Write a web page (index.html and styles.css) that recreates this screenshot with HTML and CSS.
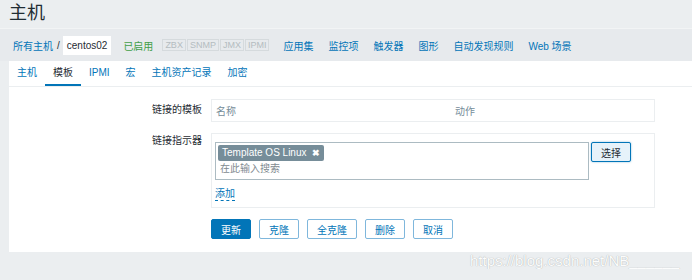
FILE: index.html
```html
<!DOCTYPE html>
<html lang="zh-CN">
<head>
  <meta charset="UTF-8">
  <title>主机</title>
  <link rel="stylesheet" href="styles.css">
</head>
<body>

  <header class="page-header">
    <h1>主机</h1>
  </header>

  <nav class="host-nav">
    <a class="crumb">所有主机</a>
    <span class="sep">/</span>
    <span class="crumb-current">centos02</span>
    <span class="status-on">已启用</span>
    <span class="avail">
      <span class="avail-tag">ZBX</span><span class="avail-tag">SNMP</span><span class="avail-tag">JMX</span><span class="avail-tag">IPMI</span>
    </span>
    <a class="nav-link">应用集</a>
    <a class="nav-link">监控项</a>
    <a class="nav-link">触发器</a>
    <a class="nav-link">图形</a>
    <a class="nav-link">自动发现规则</a>
    <a class="nav-link">Web 场景</a>
  </nav>

  <section class="panel">
    <ul class="tabs">
      <li>主机</li>
      <li class="active">模板</li>
      <li>IPMI</li>
      <li>宏</li>
      <li>主机资产记录</li>
      <li>加密</li>
    </ul>

    <div class="form">
      <div class="form-row">
        <label class="form-label">链接的模板</label>
        <div class="table-box">
          <span class="col-name">名称</span>
          <span class="col-action">动作</span>
        </div>
      </div>

      <div class="form-row">
        <label class="form-label label-top">链接指示器</label>
        <div class="link-box">
          <div class="select-row">
            <div class="multiselect">
              <span class="tag">Template OS Linux <b class="tag-x">&#10006;</b></span>
              <span class="placeholder">在此输入搜索</span>
            </div>
            <button type="button" class="pick-btn">选择</button>
          </div>
          <a class="add-link">添加</a>
        </div>
      </div>

      <div class="form-row buttons">
        <span class="form-label"></span>
        <div class="btn-row">
          <button type="button" class="btn btn-main">更新</button>
          <button type="button" class="btn">克隆</button>
          <button type="button" class="btn">全克隆</button>
          <button type="button" class="btn">删除</button>
          <button type="button" class="btn">取消</button>
        </div>
      </div>
    </div>
  </section>

  <div class="watermark">https://blog.csdn.net/NB______</div>

</body>
</html>
```

FILE: styles.css
```css
body {
  margin: 0;
  background-color: #ebeef0;
  font-family: 'Liberation Sans', Arial, 'Noto Sans CJK SC', sans-serif;
  font-size: 10px;
  color: #1f2c33;
}

.page-header {
  height: 28px;
  padding-left: 9px;
  border-bottom: 1px solid #f2f4f5;
}

.page-header h1 {
  margin: 0;
  padding-top: 1px;
  font-size: 18px;
  font-weight: normal;
  line-height: 24px;
}

.host-nav {
  height: 32px;
  padding-left: 13px;
  display: flex;
  align-items: center;
  background-color: #e7eaed;
}

.crumb {
  color: #0275b8;
}

.sep {
  margin: 0 3px 0 4px;
  color: #1f2c33;
}

.crumb-current {
  background-color: #fff;
  padding: 4px 4px;
  line-height: 11px;
  color: #1f2c33;
}

.status-on {
  color: #429e47;
  margin-left: 12px;
}

.avail {
  display: flex;
  margin-left: 9px;
  margin-right: 13px;
}

.avail-tag {
  font-size: 9px;
  color: #b4bcc0;
  padding: 0 2px;
  line-height: 10px;
  border: 1px solid #d5dadd;
  margin-right: 1px;
}

.nav-link {
  color: #0275b8;
  margin-right: 15px;
}

.panel {
  margin-left: 9px;
  height: 191px;
  background-color: #fff;
}

.tabs {
  list-style: none;
  margin: 0;
  padding: 0;
  display: flex;
  border-bottom: 1px solid #ebeef0;
}

.tabs li {
  padding: 0 8px;
  line-height: 23px;
  height: 23px;
  color: #0275b8;
  border-bottom: 2px solid transparent;
}

.tabs li.active {
  color: #1f2c33;
  border-bottom-color: #0275b8;
}

.form {
  padding-top: 12px;
}

.form-row {
  display: flex;
  margin-bottom: 11px;
}

.form-label {
  width: 193px;
  text-align: right;
  padding-right: 9px;
  line-height: 21px;
}

.label-top {
  line-height: 16px;
}

.table-box {
  width: 442px;
  height: 21px;
  border: 1px solid #ebeef0;
  display: flex;
  align-items: center;
  color: #768d99;
}

.col-name {
  margin-left: 4px;
  width: 239px;
}

.link-box {
  width: 439px;
  height: 65px;
  border: 1px solid #ebeef0;
  padding: 8px 0 0 3px;
}

.select-row {
  display: flex;
  align-items: flex-start;
}

.multiselect {
  width: 370px;
  height: 34px;
  border: 1px solid #acbbc2;
  padding-left: 2px;
  padding-top: 2px;
}

.tag {
  display: inline-block;
  background-color: #768d99;
  color: #fff;
  padding: 0 4px;
  line-height: 15px;
  border-radius: 2px;
  font-size: 10px;
}

.tag-x {
  font-size: 9px;
  margin-left: 3px;
}

.placeholder {
  display: block;
  margin: 1px 0 0 2px;
  color: #7f8a90;
  line-height: 14px;
}

.pick-btn {
  margin-left: 2px;
  width: 40px;
  height: 20px;
  padding: 0;
  font-family: inherit;
  font-size: 10px;
  color: #1f2c33;
  background-color: #e6f2fa;
  border: 1px solid #0275b8;
  border-radius: 2px;
  box-shadow: 0 0 2px rgba(2, 117, 184, 0.5);
}

.add-link {
  display: inline-block;
  margin-top: 7px;
  color: #0275b8;
  border-bottom: 1px dashed #0275b8;
  line-height: 13px;
}

.buttons {
  margin-top: 11px;
}

.btn-row {
  display: flex;
  gap: 8px;
}

.btn {
  height: 20px;
  padding: 0 9px;
  font-family: inherit;
  font-size: 10px;
  color: #0275b8;
  background-color: #fff;
  border: 1px solid #7fb7dc;
  border-radius: 2px;
}

.btn-main {
  color: #fff;
  background-color: #0275b8;
  border-color: #0275b8;
}

.watermark {
  margin: 0 0 0 470px;
  font-size: 15px;
  line-height: 17px;
  color: #fbfcfc;
  text-shadow: 0 0 1px rgba(0, 0, 0, 0.35);
  white-space: nowrap;
}
```
